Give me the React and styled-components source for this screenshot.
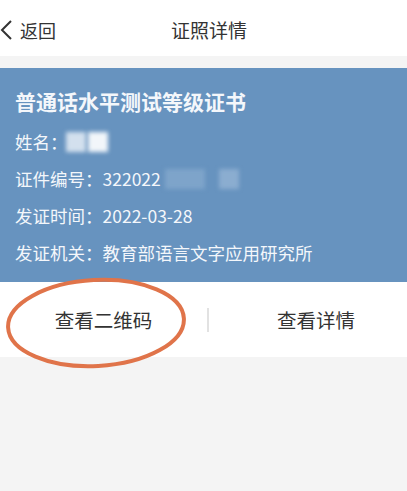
import React from "react";
import styled, { createGlobalStyle } from "styled-components";

const GlobalStyle = createGlobalStyle`
  html, body {
    margin: 0;
    padding: 0;
    background: #f4f4f4;
  }
  body {
    font-family: "Noto Sans CJK SC", "Noto Sans", sans-serif;
  }
`;

const Page = styled.div`
  width: 407px;
  min-height: 491px;
  background: #f4f4f4;
`;

const Header = styled.div`
  height: 56px;
  background: #fff;
  position: relative;
  display: flex;
  align-items: center;
  justify-content: center;
`;

const Back = styled.div`
  position: absolute;
  left: 0;
  top: 17px;
  display: flex;
  align-items: center;
  gap: 6px;
  font-size: 18px;
  color: #333;
`;

const Title = styled.div`
  font-size: 19px;
  color: #333;
  margin-left: 11px;
  margin-top: 2px;
`;

const Card = styled.div`
  margin-top: 12px;
  background: #6793bf;
  padding: 19px 15px 11px;
  color: #f4f7fb;
`;

const CardTitle = styled.div`
  font-size: 21px;
  font-weight: 700;
  line-height: 28px;
  margin-bottom: 8px;
`;

const Row = styled.div`
  font-size: 17.5px;
  line-height: 37px;
  display: flex;
  align-items: center;
`;

const Blur = styled.span`
  display: inline-block;
  width: ${(p) => p.w}px;
  height: 20px;
  background: ${(p) => p.bg};
  filter: blur(2px);
  margin-left: ${(p) => p.ml || 0}px;
`;

const Actions = styled.div`
  position: relative;
  background: #fff;
  height: 75px;
  display: flex;
  align-items: center;
`;

const Action = styled.div`
  flex: ${(p) => (p.left ? "0 0 207px" : "1")};
  padding-left: ${(p) => (p.left ? 0 : 16)}px;
  text-align: center;
  font-size: 19.5px;
  color: #333;
`;

const Divider = styled.div`
  width: 2px;
  height: 24px;
  background: #e2e2e2;
`;

const Circle = styled.svg`
  position: absolute;
  left: 4px;
  top: -5px;
  pointer-events: none;
`;

export default function App() {
  return (
    <Page>
      <GlobalStyle />
      <Header>
        <Back>
          <svg width="14" height="22" viewBox="0 0 14 22">
            <path d="M11 2 L2 11 L11 20" fill="none" stroke="#333" strokeWidth="2" />
          </svg>
          返回
        </Back>
        <Title>证照详情</Title>
      </Header>
      <Card>
        <CardTitle>普通话水平测试等级证书</CardTitle>
        <Row>
          姓名：
          <Blur w={20} bg="#d3e0ee" ml={-2} />
          <Blur w={20} bg="#f2f6fa" ml={2} />
        </Row>
        <Row>
          证件编号：322022
          <Blur w={40} bg="#7ea4ca" ml={4} />
          <Blur w={20} bg="#8badd0" ml={14} />
        </Row>
        <Row>发证时间：2022-03-28</Row>
        <Row>发证机关：教育部语言文字应用研究所</Row>
      </Card>
      <Actions>
        <Action left>查看二维码</Action>
        <Divider />
        <Action>查看详情</Action>
        <Circle width="190" height="96" viewBox="0 0 190 96">
          <ellipse
            cx="92"
            cy="46"
            rx="88"
            ry="43"
            fill="none"
            stroke="#e0744a"
            strokeWidth="4"
            transform="rotate(-3 92 46)"
          />
        </Circle>
      </Actions>
    </Page>
  );
}
